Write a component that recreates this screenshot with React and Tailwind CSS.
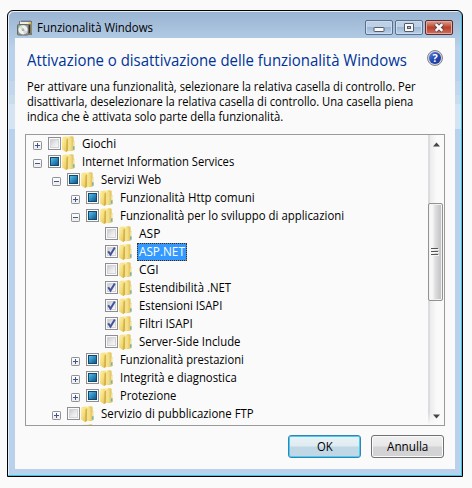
import React, { useLayoutEffect, useRef, useState } from "react";

// Single line of text condensed horizontally to fill the width `w` (px).
function FitText({ w, className = "", children }) {
  const ref = useRef(null);
  const [scale, setScale] = useState(1);
  useLayoutEffect(() => {
    setScale(w / ref.current.offsetWidth);
  }, [w, children]);
  return (
    <span className={"block shrink-0 whitespace-nowrap " + className} style={{ width: w }}>
      <span ref={ref} className="inline-block origin-left" style={{ transform: `scaleX(${scale})` }}>
        {children}
      </span>
    </span>
  );
}

function Folder() {
  return (
    <svg width="14" height="16" viewBox="0 0 14 16" className="mt-px ml-px block shrink-0">
      <defs>
        <linearGradient id="fback" x1="0" x2="1">
          <stop offset="0" stopColor="#ecd16f" />
          <stop offset=".5" stopColor="#fff0a4" />
          <stop offset="1" stopColor="#e2c25c" />
        </linearGradient>
        <linearGradient id="ffront" x1="0" x2="1" y2="1">
          <stop offset="0" stopColor="#fff2ac" />
          <stop offset=".5" stopColor="#f3dc7c" />
          <stop offset="1" stopColor="#dcb94c" />
        </linearGradient>
      </defs>
      <path d="M1 1L10 0L11.6 1V14.5L4 15.5Z" fill="url(#fback)" />
      <path d="M0 1.5L4.5 1L6 2.5V14.6L4 16L0 13.5Z" fill="url(#ffront)" />
      <path d="M4.5 3.5L6 2.5V14.8L4 16Z" fill="#d5b24a" />
      <path d="M6 2L8 1.5V14.5L6 15Z" fill="#f5e08a" />
      <path d="M8 1.5L10.5 1L11 4.5L12.8 5.5V14L8 15Z" fill="#e6c963" />
      <path d="M8.2 2L9.4 1.6V14L8.2 14.4Z" fill="#f7e491" />
      <path d="M11.4 5.5H12.9V10H11.4Z" fill="#f5efcf" />
      <path d="M11 10.5H12.3V13.4H11Z" fill="#58b7e2" />
    </svg>
  );
}

function Check({ state }) {
  return (
    <svg width="13" height="13" viewBox="0 0 13 13" className="mt-[2px] block shrink-0">
      <defs>
        <linearGradient id="cempty" x2="1" y2="1">
          <stop offset="0" stopColor="#c6c8cc" />
          <stop offset=".5" stopColor="#e7e7e8" />
          <stop offset="1" stopColor="#fafafa" />
        </linearGradient>
        <linearGradient id="cfull" x2="1" y2="1">
          <stop offset="0" stopColor="#62c4e8" />
          <stop offset=".5" stopColor="#2b8dbf" />
          <stop offset="1" stopColor="#10517f" />
        </linearGradient>
      </defs>
      <rect x=".5" y=".5" width="12" height="12" fill="#fafafa" stroke="#8c8e91" />
      {state === "full" ? (
        <rect x="2.5" y="2.5" width="8" height="8" fill="url(#cfull)" stroke="#17466b" />
      ) : (
        <rect x="2.5" y="2.5" width="8" height="8" fill="url(#cempty)" stroke="#d4d4d8" />
      )}
      {state === "on" && <path d="M3.2 6.2L5.5 9.6L9.8 2.6" fill="none" stroke="#42549a" strokeWidth="2" />}
    </svg>
  );
}

function Expander({ kind }) {
  if (!kind) return <span className="w-[9px] shrink-0" />;
  return (
    <svg width="9" height="9" viewBox="0 0 9 9" className="mt-[6px] block shrink-0">
      <rect x=".5" y=".5" width="8" height="8" rx=".7" fill="#efefef" stroke="#929292" />
      <path d="M1 1H8V4H1Z" fill="#fafafa" />
      <path d="M2 4.5H7" stroke="#3d5594" />
      {kind === "+" && <path d="M4.5 2V7" stroke="#3d5594" />}
    </svg>
  );
}

const rows = [
  ["pl-[7px]", "+", "off", "Giochi", 34],
  ["pl-[7px]", "-", "full", "Internet Information Services", 152],
  ["pl-[26px]", "-", "full", "Servizi Web", 60],
  ["pl-[45px]", "+", "full", "Funzionalità Http comuni", 135],
  ["pl-[45px]", "-", "full", "Funzionalità per lo sviluppo di applicazioni", 224],
  ["pl-[64px]", "", "off", "ASP", 21],
  ["pl-[64px]", "", "on", "ASP.NET", 46],
  ["pl-[64px]", "", "off", "CGI", 20],
  ["pl-[64px]", "", "on", "Estendibilità .NET", 92],
  ["pl-[64px]", "", "on", "Estensioni ISAPI", 83],
  ["pl-[64px]", "", "on", "Filtri ISAPI", 54],
  ["pl-[64px]", "", "off", "Server-Side Include", 101],
  ["pl-[45px]", "+", "full", "Funzionalità prestazioni", 124],
  ["pl-[45px]", "+", "full", "Integrità e diagnostica", 117],
  ["pl-[45px]", "+", "full", "Protezione", 56],
  ["pl-[26px]", "+", "off", "Servizio di pubblicazione FTP", 153],
];

function Row({ row }) {
  const [pad, kind, state, label, w] = row;
  const selected = label === "ASP.NET";
  return (
    <div className={"flex h-[18px] shrink-0 items-start " + pad}>
      <Expander kind={kind} />
      <span className="w-[6px] shrink-0" />
      <Check state={state} />
      <Folder />
      <div
        className={
          "ml-[4px] flex h-[18px] border border-dotted pl-px pr-px " +
          (selected ? "border-[#502800] bg-[#3399ff] text-white" : "border-transparent")
        }
      >
        <FitText w={w} className="leading-[16px]">{label}</FitText>
      </div>
    </div>
  );
}

function WindowButton({ close, children }) {
  return (
    <div
      className={
        "flex h-[15px] w-7 rounded-[2px] border p-0 " +
        (close
          ? "border-[#5d2a2b] bg-linear-to-b from-[#dba093] from-0% via-[#b9402b] via-50% to-[#d0705c] shadow-[inset_0_0_0_1px_#e0aaa0]"
          : "border-[#596f8c] bg-linear-to-b from-[#bdd0e5] from-45% via-[#9db7d3] via-50% to-[#b9d1ea] shadow-[inset_0_0_0_1px_#cbdcee]")
      }
    >
      <svg width="26" height="13" viewBox="0 0 26 13">{children}</svg>
    </div>
  );
}

function SetupIcon() {
  return (
    <svg width="16" height="16" viewBox="0 0 16 16" className="mt-[9px] block shrink-0">
      <path d="M2 1H15V15H11V5H2Z" fill="#77756d" />
      <path d="M3 1.5H14V4H3Z" fill="#f0ede0" />
      <path d="M4 1.2H14" stroke="#555a85" />
      <path d="M11.5 2H14V4H11.5Z" fill="#edc945" />
      <path d="M12 5H13.5V13H12Z" fill="#323232" />
      <path d="M14 3V13" stroke="#a99c68" />
      <rect x=".5" y="4.5" width="11" height="10.5" rx="1" fill="#969d90" stroke="#666b64" />
      <circle cx="6" cy="9.8" r="4.6" fill="#f1f3ed" />
      <path d="M6 9.8L2 7.5A4.6 4.6 0 0 1 5 5.4Z" fill="#c9e8d0" />
      <path d="M6 9.8L10.3 11A4.6 4.6 0 0 1 7 14.2Z" fill="#dbcceb" />
      <circle cx="6" cy="9.8" r="1.3" fill="#8c9ca0" />
      <circle cx="6" cy="9.8" r=".5" fill="#fff" />
    </svg>
  );
}

function HelpIcon() {
  return (
    <div className="mt-[12px] mr-[12px] ml-auto flex size-4 shrink-0 items-center justify-center rounded-full border border-[#85878b] bg-[#d2d3d8] p-px">
      <div className="flex size-3 shrink-0 items-center justify-center rounded-full bg-linear-to-br from-[#6a87d8] via-[#2447b2] to-[#193894] text-[11px] leading-[12px] font-bold text-white">
        ?
      </div>
    </div>
  );
}

function ScrollBar() {
  return (
    <div className="flex h-full w-4 shrink-0 flex-col bg-linear-to-r from-[#dcdce0] from-12% via-[#ebebec] via-13% to-[#fafafa] to-55%">
      <div className="flex h-[68px] justify-center pt-[7px]">
        <svg width="9" height="5" viewBox="0 0 9 5"><path d="M1 4.5L4.5 .5L8 4.5Z" fill="#454545" /></svg>
      </div>
      <div className="flex h-[98px] w-[15px] items-center justify-center rounded-[2px] border border-[#929292] bg-linear-to-r from-[#f7f7f7] from-25% via-[#dddddf] via-50% to-[#bebec2] shadow-[inset_0_0_0_1px_#f2f2f2]">
        <svg width="8" height="10" viewBox="0 0 8 10" className="-ml-px">
          <path d="M0 1.5H7M0 4.5H7M0 7.5H7" stroke="#555" />
          <path d="M0 2.5H8M0 5.5H8M0 8.5H8" stroke="#f5f5f5" />
        </svg>
      </div>
      <div className="flex flex-1 items-end justify-center bg-linear-to-b from-transparent from-90% to-[#fafafa] pb-[6px]">
        <svg width="9" height="5" viewBox="0 0 9 5"><path d="M1 .5L4.5 4.5L8 .5Z" fill="#454545" /></svg>
      </div>
    </div>
  );
}

function FrameGlass({ className = "" }) {
  return (
    <div className={"flex w-[6px] shrink-0 flex-col " + className}>
      <div className="h-[43px]" />
      <div className="h-[14px] bg-[#c3d7ec]" />
      <div className="h-[9px] bg-[#c9dcec]" />
      <div className="h-[25px] bg-[#d5e4f3]" />
    </div>
  );
}

export default function App() {
  return (
    <div className="h-[488px] w-[472px] overflow-hidden bg-[#fafafa] pt-[10px] pl-[7px] font-['Open_Sans','Noto_Sans',sans-serif] text-[12px] text-black">
      <div className="flex h-[467px] w-[456px] flex-col rounded-t-[6px] border border-black bg-linear-to-b from-[#99b4d1] to-[#b9d1ea] to-8% shadow-[inset_-1px_-1px_0_#38c5e8,inset_1px_1px_0_#e6eef6]">
        <div className="flex h-[27px] shrink-0 items-start pl-[9px]">
          <SetupIcon />
          <FitText w={116} className="mt-[8px] ml-[4px] leading-[18px]">Funzionalità Windows</FitText>
          <div className="mt-[9px] mr-[9px] ml-auto flex gap-[2px]">
            <WindowButton>
              <rect x="8" y="6.5" width="10" height="4" rx=".5" fill="#fafafa" stroke="#555b68" />
            </WindowButton>
            <WindowButton>
              <rect x="8.5" y="2.5" width="9" height="8" rx=".5" fill="#fafafa" stroke="#555b68" />
              <rect x="11.5" y="5.5" width="3" height="2" fill="#aac0d9" stroke="#555b68" />
            </WindowButton>
            <WindowButton close>
              <path d="M9.5 3L16.5 10M16.5 3L9.5 10" stroke="#5a4249" strokeWidth="4.2" />
              <path d="M9.7 3.2L16.3 9.8M16.3 3.2L9.7 9.8" stroke="#fafafa" strokeWidth="2.6" />
            </WindowButton>
          </div>
        </div>
        <div className="flex flex-1">
          <FrameGlass className="ml-px" />
          <div className="flex h-[431px] w-[440px] shrink-0 flex-col bg-[#fafafa]">
            <div className="flex h-[40px] shrink-0 items-start">
              <FitText w={380} className="mt-[10px] ml-[12px] text-[16px] leading-[24px] text-[#003399]">
                Attivazione o disattivazione delle funzionalità Windows
              </FitText>
              <HelpIcon />
            </div>
            <div className="flex h-[56px] shrink-0 flex-col pt-[1px] pl-[12px] leading-[15px]">
              <FitText w={389}>Per attivare una funzionalità, selezionare la relativa casella di controllo. Per</FitText>
              <FitText w={386}>disattivarla, deselezionare la relativa casella di controllo. Una casella piena</FitText>
              <FitText w={256}>indica che è attivata solo parte della funzionalità.</FitText>
            </div>
            <div className="ml-[10px] flex h-[292px] w-[420px] shrink-0 border border-[#9a9a9a]">
              <div className="flex h-[290px] flex-1 flex-col overflow-hidden">
                {rows.map((row) => (
                  <Row key={row[3]} row={row} />
                ))}
                <div className="flex h-[2px] shrink-0 overflow-hidden pl-[54px]">
                  <Folder />
                </div>
              </div>
              <ScrollBar />
            </div>
            <div className="flex justify-end gap-[10px] pt-[9px] pr-[11px]">
              <div className="flex h-[23px] w-[73px] justify-center rounded-[3px] border border-[#3c7fb1] bg-linear-to-b from-[#eaf3f6] from-0% via-[#dfebf1] via-49% to-[#c0d7e5] to-51% shadow-[inset_0_0_0_1px_#42d0f4]">
                <FitText w={16} className="leading-[21px]">OK</FitText>
              </div>
              <div className="flex h-[23px] w-[73px] justify-center rounded-[3px] border border-[#707070] bg-linear-to-b from-[#f0f0f1] from-0% via-[#e7e7e9] via-49% to-[#d3d3d6] to-51% shadow-[inset_0_0_0_1px_#fafafa]">
                <FitText w={41} className="leading-[21px]">Annulla</FitText>
              </div>
            </div>
          </div>
          <FrameGlass />
        </div>
        <div className="h-[7px] shrink-0" />
      </div>
    </div>
  );
}
